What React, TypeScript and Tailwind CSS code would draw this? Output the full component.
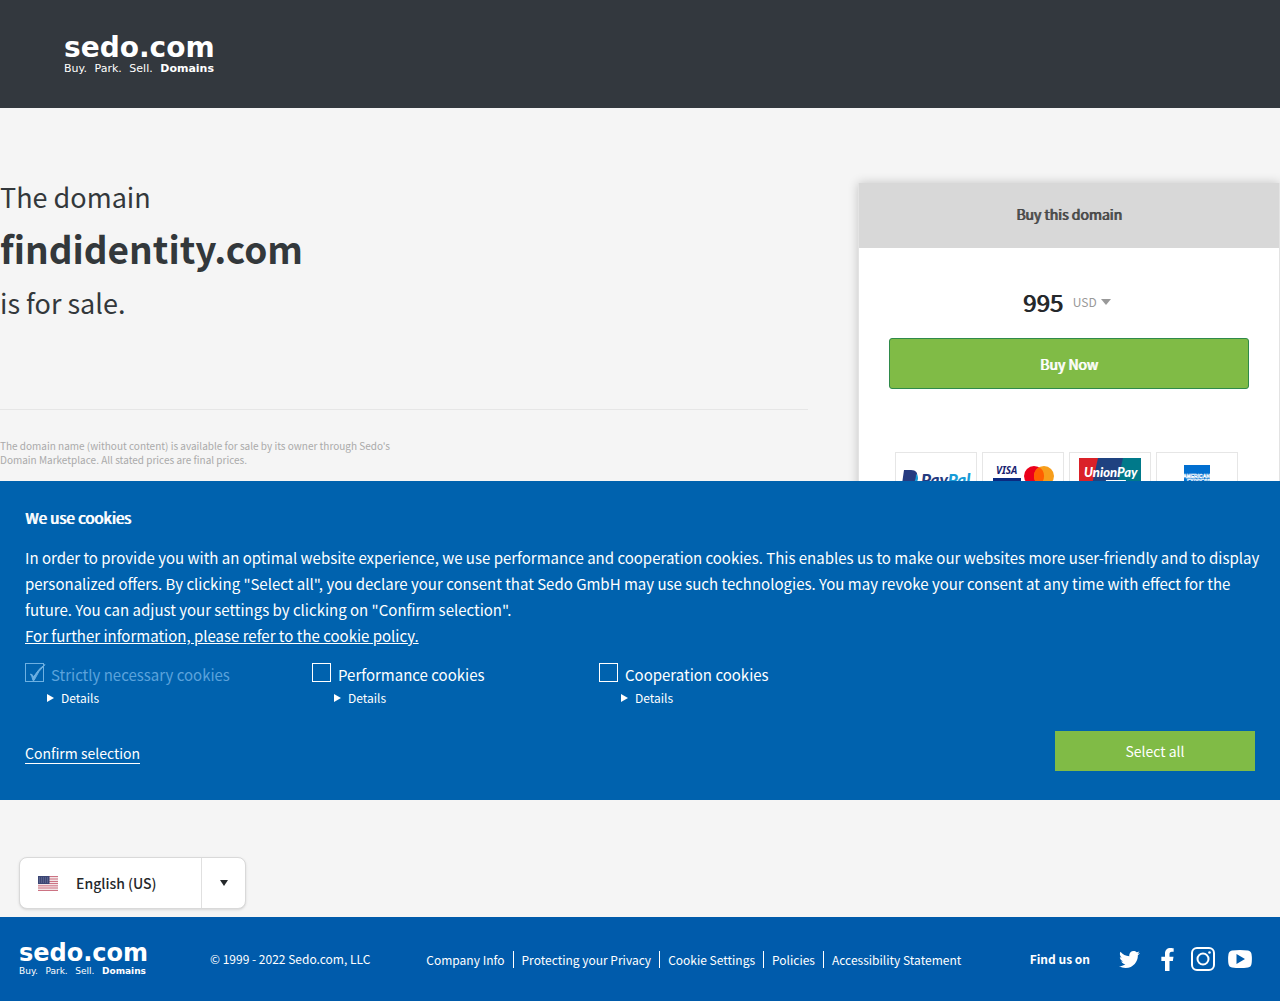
import { FaFacebookF, FaTwitter } from 'react-icons/fa'
import clsx from 'clsx'

const footerLinks = [
  'Company Info',
  'Protecting your Privacy',
  'Cookie Settings',
  'Policies',
  'Accessibility Statement',
]

const cookieGroups = [
  { id: 'necessary', label: 'Strictly necessary cookies', locked: true },
  { id: 'performance', label: 'Performance cookies', locked: false },
  { id: 'cooperation', label: 'Cooperation cookies', locked: false },
]

function Logo({ small = false }: { small?: boolean }) {
  return (
    <a
      href="#"
      className={clsx("block font-['DejaVu_Sans'] text-white", small ? 'w-[127px]' : 'w-[150px]')}
    >
      <span
        className={clsx(
          'block font-bold',
          small ? 'text-2xl leading-6' : 'text-[28px] leading-[26px]',
        )}
      >
        sedo.com
      </span>
      <span
        className={clsx(
          'flex justify-between',
          small ? 'text-[9px] leading-3' : 'text-[11px] leading-4',
        )}
      >
        <span>Buy.</span>
        <span>Park.</span>
        <span>Sell.</span>
        <span className="font-bold">Domains</span>
      </span>
    </a>
  )
}

function PayPal() {
  return (
    <svg viewBox="0 1 80 56" className="h-14 w-20">
      <path d="M8 18h7c5 0 7 3 6 7-1 5-4 7-9 7h-3l-1 7H5z" fill="#253b80" />
      <path d="M20 22c2 1 2 3 2 5-1 4-4 6-8 6h-2l-2 8H7l2-8h3c5 0 8-3 8-11z" fill="#179bd7" />
      <text x="25" y="34" fontFamily="Lato" fontSize="17" fontWeight="900" fontStyle="italic" fill="#253b80">
        Pay<tspan fill="#179bd7">Pal</tspan>
      </text>
    </svg>
  )
}

function VisaMastercard() {
  return (
    <svg viewBox="0 1 80 56" className="h-14 w-20">
      <text x="13" y="22" fontFamily="Noto Sans" fontSize="10" fontWeight="700" fontStyle="italic" fill="#1a1f71">
        VISA
      </text>
      <path d="M10 26h28v16H10z" fill="#0b2a80" />
      <circle cx="51" cy="24" r="10" fill="#eb001b" />
      <circle cx="61" cy="24" r="10" fill="#f79e1b" />
      <path d="M56 15.300a10 10 0 0 1 0 17.400a10 10 0 0 1 0-17.400" fill="#ff5f00" />
    </svg>
  )
}

function UnionPay() {
  return (
    <svg viewBox="0 1 80 56" className="h-14 w-20">
      <path d="M9 6h62v40H9z" fill="#00798a" />
      <path d="M26 6h27l-9 40H18z" fill="#1f4280" />
      <path d="M9 6h19l-9 40H9z" fill="#da2128" />
      <text x="14" y="25" fontFamily="Lato" fontSize="13" fontWeight="900" fontStyle="italic" fill="#fff">
        UnionPay
      </text>
      <path d="M36 28h20l-2 10H34z" fill="#fff" />
    </svg>
  )
}

function Amex() {
  return (
    <svg viewBox="0 1 80 56" className="h-14 w-20">
      <path d="M27 13h26v26H27z" fill="#016fd0" />
      <g fontFamily="Liberation Sans" fontSize="5" fontWeight="700" fill="none" stroke="#fff" strokeWidth=".5">
        <text x="26" y="26">AMERICAN</text>
        <text x="30" y="31">EXPRESS</text>
      </g>
    </svg>
  )
}

function Flag() {
  return (
    <svg viewBox="0 0 20 15" className="h-[15px] w-5 shrink-0">
      <path d="M0 0h20v15H0z" fill="#f3e4e6" />
      <path
        d="M0 .500h20M0 3h20M0 5.500h20M0 7.500h20M0 9.800h20M0 12h20M0 14.500h20"
        stroke="#c2566a"
        strokeWidth=".8"
      />
      <path d="M0 0h11.500v8H0z" fill="#3b4674" />
      <path d="M1 2h10M1 4h10M1 6h10" stroke="#8d94b5" strokeWidth=".7" strokeDasharray="1 1" />
    </svg>
  )
}

function Triangle({ className }: { className?: string }) {
  return (
    <svg viewBox="0 0 8 6" preserveAspectRatio="none" className={className}>
      <path d="M0 0h8L4 6z" fill="currentColor" />
    </svg>
  )
}

function CookieOption({ id, label, locked }: { id: string; label: string; locked: boolean }) {
  return (
    <div className="w-[287px]">
      <div className="flex">
        <span className="relative size-[19px] shrink-0">
          <input
            id={id}
            type="checkbox"
            defaultChecked={locked}
            disabled={locked}
            className="block size-[19px] appearance-none border border-white disabled:border-[#6db0e2]"
          />
          {locked && (
            <svg viewBox="0 0 19 19" className="absolute inset-0 size-[19px] overflow-visible">
              <path
                d="M5.500 11q2 0 3 3Q14 5 20 1.500 13 8 9 17.500H8Q7 13 5.500 11z"
                fill="#6db0e2"
                stroke="#6db0e2"
              />
            </svg>
          )}
        </span>
        <label
          htmlFor={id}
          className={clsx('ml-[7px] text-[15px] leading-6', locked && 'text-[#5ba3dc]')}
        >
          {label}
        </label>
      </div>
      <details className="ml-[22px]">
        <summary className="flex list-none items-center gap-[7px] text-xs leading-[22px]">
          <svg viewBox="0 0 7 8" className="h-2 w-[7px]">
            <path d="M0 0l7 4-7 4z" fill="currentColor" />
          </svg>
          Details
        </summary>
      </details>
    </div>
  )
}

function CookieBanner() {
  return (
    <section className="absolute inset-x-0 bottom-0 bg-[#0062ae] pt-6 pr-4 pb-[29px] pl-[25px] text-white">
      <h2 className="text-[15px] leading-[26px] [text-shadow:1px_0_currentColor]">We use cookies</h2>
      <p className="mt-[14px] text-[15px] leading-[26px]">
        In order to provide you with an optimal website experience, we use performance and cooperation
        cookies. This enables us to make our websites more user-friendly and to display personalized
        offers. By clicking "Select all", you declare your consent that Sedo GmbH may use such
        technologies. You may revoke your consent at any time with effect for the future. You can
        adjust your settings by clicking on "Confirm selection".
        <br />
        <a href="#" className="underline">
          For further information, please refer to the cookie policy.
        </a>
      </p>
      <div className="mt-[14px] flex">
        {cookieGroups.map((group) => (
          <CookieOption key={group.id} {...group} />
        ))}
      </div>
      <div className="mt-[22px] flex items-end justify-between pr-[9px]">
        <button className="mb-[7px] border-b border-white text-sm leading-5">Confirm selection</button>
        <button className="h-10 w-[200px] bg-[#80bb46] text-sm">Select all</button>
      </div>
    </section>
  )
}

function BuyBox() {
  return (
    <aside className="h-[500px] w-[33%] border border-t-0 border-[#e3e3e3] bg-white shadow-[0_0_10px_rgba(0,0,0,0.2)]">
      <h2 className="bg-[#d8d8d8] pb-[2px] text-center text-sm leading-[63px] text-[#484848] [text-shadow:1px_0_currentColor]">
        Buy this domain
      </h2>
      <div className="px-[30px] pt-[34px]">
        <div className="flex items-center justify-center gap-[10px] pr-1">
          <span className="text-2xl leading-10 text-[#25282b] [text-shadow:1px_0_currentColor]">995</span>
          <span className="flex items-center gap-1 text-[#999]">
            <select aria-label="Currency" className="appearance-none text-xs">
              <option>USD</option>
            </select>
            <Triangle className="h-[6px] w-[10px]" />
          </span>
        </div>
        <button className="mt-4 h-[51px] w-full rounded-[3px] border border-[#2f8a4a] bg-[#80bb46] text-sm text-white [text-shadow:1px_0_currentColor]">
          Buy Now
        </button>
        <ul className="mt-[63px] flex justify-center gap-[5px] pr-1">
          {[PayPal, VisaMastercard, UnionPay, Amex].map((Card) => (
            <li key={Card.name} className="border border-[#e6e6e6]">
              <Card />
            </li>
          ))}
        </ul>
      </div>
    </aside>
  )
}

export default function App() {
  return (
    <div className="min-h-screen bg-[#f5f5f5] font-['Noto_Sans_CJK_SC',sans-serif] text-[#33383b]">
      <header className="h-[108px] bg-[#33383e] px-16 pt-[35px]">
        <Logo />
      </header>

      <main className="relative flex min-h-[692px] gap-[50px] pt-[75px]">
        <div className="flex-1">
          <h1 className="border-b border-[#e6e6e6] pb-[92px] text-[27px] leading-7">
            The domain
            <span className="mt-[15px] mb-[19px] block text-[37px] leading-[44px] font-bold">
              findidentity.com
            </span>
            is for sale.
          </h1>
          <p className="mt-[29px] w-[400px] text-[10px] leading-[14px] text-[#aaa]">
            The domain name (without content) is available for sale by its owner through Sedo's Domain
            Marketplace. All stated prices are final prices.
          </p>
        </div>
        <BuyBox />
        <CookieBanner />
      </main>

      <div className="px-[19px] pt-[57px] pb-2">
        <div className="flex h-[52px] w-[227px] items-center rounded-lg border border-[#d9d9d9] bg-white pl-[18px] shadow-sm">
          <Flag />
          <select
            aria-label="Language"
            className="ml-[18px] flex-1 appearance-none text-sm font-medium text-[#25282b]"
          >
            <option>English (US)</option>
          </select>
          <span className="flex h-full w-11 items-center justify-center border-l border-[#e0e0e0] text-[#25282b]">
            <Triangle className="h-[6px] w-2" />
          </span>
        </div>
      </div>

      <footer className="flex h-[84px] items-center bg-[#005bab] px-[19px] text-xs text-white">
        <Logo small />
        <p className="ml-16">© 1999 - 2022 Sedo.com, LLC</p>
        <nav className="ml-12 flex">
          {footerLinks.map((link) => (
            <a key={link} href="#" className="border-r border-white px-2 leading-[17px] last:border-0">
              {link}
            </a>
          ))}
        </nav>
        <div className="ml-auto flex items-center pr-[9px]">
          <span className="mr-[29px] font-bold">Find us on</span>
          <a href="#" aria-label="Twitter">
            <FaTwitter size={21} />
          </a>
          <a href="#" aria-label="Facebook" className="ml-4">
            <FaFacebookF size={23} />
          </a>
          <a href="#" aria-label="Instagram" className="ml-3">
            <svg viewBox="0 0 24 24" className="size-6" fill="none" stroke="currentColor" strokeWidth="2">
              <rect x="1" y="1" width="22" height="22" rx="5" />
              <circle cx="12" cy="12" r="5.500" />
              <circle cx="18.500" cy="5.500" r="1.300" fill="currentColor" stroke="none" />
            </svg>
          </a>
          <a href="#" aria-label="YouTube" className="ml-[13px]">
            <svg viewBox="0 0 24 18" className="h-[18px] w-6">
              <path
                d="M4 .500Q12-.500 20 .500 23 1 23.500 4q.800 5 0 10-.500 3-3.500 3.500-8 1-16 0Q1 17 .500 14-.300 9 .500 4 1 1 4 .500zM8.500 4v10l8.500-5z"
                fill="currentColor"
                fillRule="evenodd"
              />
            </svg>
          </a>
        </div>
      </footer>
    </div>
  )
}
